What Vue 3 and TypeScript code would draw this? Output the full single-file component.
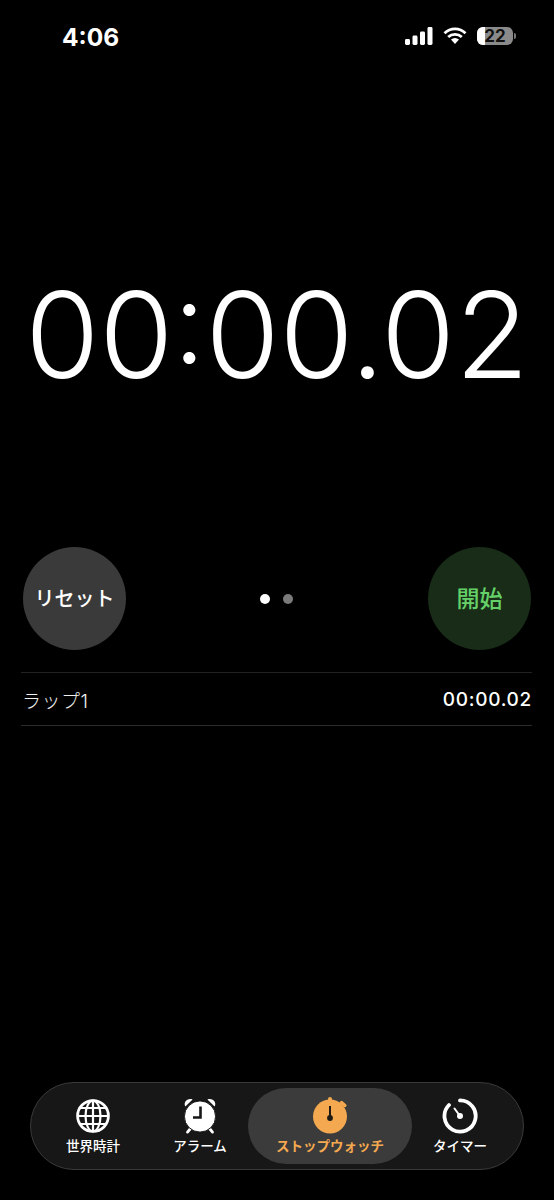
<script setup lang="ts">
const appTitle = "Stopwatch";
</script>

<template>
  <div class="screen" :data-title="appTitle">
    <header class="status">
      <span class="clock">4:06</span>
      <div class="status-icons">
        <svg width="28" height="18" viewBox="0 0 28 18">
          <rect x="0" y="12" width="5" height="6" rx="1.4" fill="#fff" />
          <rect x="7.5" y="8.5" width="5" height="9.5" rx="1.4" fill="#fff" />
          <rect x="15" y="4.5" width="5" height="13.5" rx="1.4" fill="#fff" />
          <rect x="22.5" y="0" width="5" height="18" rx="1.4" fill="#fff" />
        </svg>
        <svg width="24" height="18" viewBox="0 0 24 18">
          <path d="M1.5 6.2a15 15 0 0 1 21 0M5.2 10a10 10 0 0 1 13.6 0" fill="none" stroke="#fff" stroke-width="2.8" />
          <path d="M8 12.6a6 6 0 0 1 8 0L12 17z" fill="#fff" />
        </svg>
        <div class="battery">
          <div class="battery-body">
            <span class="battery-fill"></span>
            <span class="battery-text">22</span>
          </div>
          <span class="battery-cap"></span>
        </div>
      </div>
    </header>

    <div class="time">00<span class="colon">:</span>00.02</div>

    <section class="controls">
      <button class="round reset">リセット</button>
      <div class="dots"><span class="dot on"></span><span class="dot"></span></div>
      <button class="round start">開始</button>
    </section>

    <section class="laps">
      <div class="lap">
        <span class="lap-name">ラップ1</span>
        <span class="lap-time">00:00.02</span>
      </div>
    </section>

    <nav class="tabbar">
      <div class="tab">
        <svg width="36" height="38" viewBox="0 -1 36 38" fill="none" stroke="#fff" stroke-width="2.2">
          <circle cx="18" cy="18" r="15.4" stroke-width="2.8" />
          <ellipse cx="18" cy="18" rx="7.5" ry="15.4" />
          <path d="M18 2.5v31M2.5 18h31M5 10h26M5 26h26" />
        </svg>
        <span>世界時計</span>
      </div>
      <div class="tab">
        <svg width="36" height="38" viewBox="0 0 36 38">
          <path d="M3.4 9.6C1 5.6 5 .6 10.6 2.4zM32.6 9.6C35 5.6 31 .6 25.4 2.4z" fill="#fff" />
          <path d="M8.5 31.5l-3 3.6M27.5 31.5l3 3.6" stroke="#fff" stroke-width="2.8" stroke-linecap="round" />
          <circle cx="18" cy="19.5" r="15.6" fill="#fff" stroke="#171717" stroke-width="1" />
          <path d="M18.5 9.5v11h-7.5" fill="none" stroke="#171717" stroke-width="2.6" />
        </svg>
        <span>アラーム</span>
      </div>
      <div class="tab active">
        <svg width="36" height="38" viewBox="0 0 36 38">
          <rect x="16" y="0" width="4" height="6" rx="2" fill="#f4a950" />
          <path d="M29.5 5.5l3.4 3" stroke="#f4a950" stroke-width="3.4" stroke-linecap="round" />
          <circle cx="18" cy="19.5" r="17" fill="#f4a950" />
          <path d="M18 9v11" stroke="#1f1a14" stroke-width="2" />
          <circle cx="18" cy="21" r="2.9" fill="#1f1a14" />
        </svg>
        <span>ストップウォッチ</span>
      </div>
      <div class="tab">
        <svg width="36" height="38" viewBox="0 -1 36 38" fill="none">
          <path d="M18 2.4A15.6 15.6 0 1 1 7 7" stroke="#fff" stroke-width="3.8" stroke-linecap="round" />
          <path d="M12.5 10.5L18 18" stroke="#fff" stroke-width="2" stroke-linecap="round" />
          <circle cx="18" cy="18" r="3" fill="#fff" />
        </svg>
        <span>タイマー</span>
      </div>
    </nav>
  </div>
</template>

<style>
html, body { margin: 0; background: #000; }
</style>

<style scoped>
.screen {
  width: 554px;
  height: 1200px;
  background: #000;
  color: #fff;
  display: flex;
  flex-direction: column;
  font-family: "Inter", "Noto Sans CJK JP", sans-serif;
  overflow: hidden;
}
.status {
  height: 74px;
  box-sizing: border-box;
  padding: 23px 38px 0 62px;
  display: flex;
  justify-content: space-between;
  align-items: flex-start;
}
.clock {
  font-size: 24.5px;
  line-height: 28px;
  font-weight: 700;
}
.status-icons {
  display: flex;
  align-items: center;
  gap: 10px;
  padding-top: 4px;
}
.battery { display: flex; align-items: center; gap: 1px; }
.battery-body {
  position: relative;
  width: 36px;
  height: 18px;
  border-radius: 6px;
  background: #8a8a8a;
  overflow: hidden;
}
.battery-fill {
  position: absolute;
  left: 0;
  top: 0;
  bottom: 0;
  width: 8px;
  background: #fff;
}
.battery-text {
  position: absolute;
  inset: 0;
  text-align: center;
  font-size: 17px;
  line-height: 18px;
  font-weight: 700;
  color: #111;
}
.battery-cap {
  width: 2px;
  height: 6px;
  background: #777;
  border-radius: 0 2px 2px 0;
}
.time {
  margin-top: 187px;
  height: 149px;
  margin-bottom: -4px;
  text-align: center;
  font-family: "Inter", sans-serif;
  font-weight: 285;
  font-size: 120px;
  line-height: 147px;
  letter-spacing: -0.1px;
  white-space: nowrap;
}
.colon {
  font-size: 114px;
  font-weight: 285;
  line-height: 0;
  vertical-align: 15px;
}
.controls {
  margin-top: 141px;
  padding: 0 23px;
  display: flex;
  justify-content: space-between;
  align-items: center;
}
.round {
  width: 103px;
  height: 103px;
  border: 0;
  padding: 0 0 3px;
  border-radius: 50%;
  font-family: inherit;
  font-weight: 500;
  font-size: 20px;
  white-space: nowrap;
}
.reset { background: #3a3a3a; color: #fff; }
.start { background: #182c18; color: #66d068; font-size: 23px; }
.dots { display: flex; gap: 13px; align-items: center; margin-left: -2px; }
.dot { width: 10px; height: 10px; border-radius: 50%; background: #7a7a7a; }
.dot.on { background: #fff; }
.laps {
  margin: 22px 22px 0 21px;
  border-top: 1px solid #222;
  border-bottom: 1px solid #2c2c2c;
}
.lap {
  height: 52px;
  padding: 0 0 0 1px;
  display: flex;
  justify-content: space-between;
  align-items: center;
}
.lap-name { font-size: 19px; font-weight: 300; color: #f0f0f0; letter-spacing: 0.5px; }
.lap-time { font-size: 19px; font-weight: 500; letter-spacing: 0.7px; }
.tabbar {
  margin: 356px 30px 0;
  height: 88px;
  box-sizing: border-box;
  border: 1px solid #3a3a3a;
  border-radius: 44px;
  background: #171717;
  padding: 5px 0 5px 3px;
  display: grid;
  grid-template-columns: 118px 96px 164px 96px;
  align-items: stretch;
}
.tab {
  display: flex;
  flex-direction: column;
  align-items: center;
  justify-content: center;
  gap: 2px;
  border-radius: 38px;
  font-size: 13.5px;
  font-weight: 500;
  white-space: nowrap;
}
.tab span { line-height: 18px; }
.tab.active {
  background: #3b3b3b;
  color: #f4a950;
  font-weight: 700;
}
</style>
